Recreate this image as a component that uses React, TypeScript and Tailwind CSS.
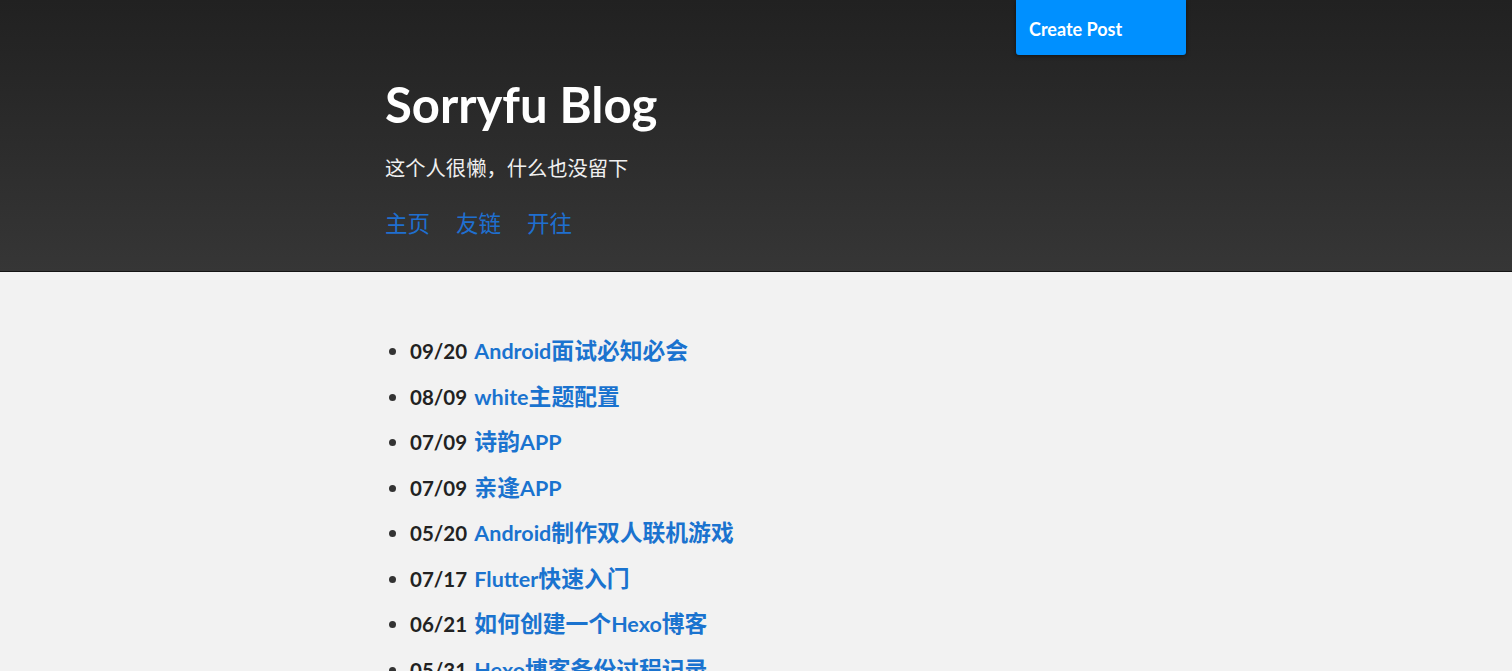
import React from "react";

const posts = [
  { date: "09/20", title: "Android面试必知必会" },
  { date: "08/09", title: "white主题配置" },
  { date: "07/09", title: "诗韵APP" },
  { date: "07/09", title: "亲逢APP" },
  { date: "05/20", title: "Android制作双人联机游戏" },
  { date: "07/17", title: "Flutter快速入门" },
  { date: "06/21", title: "如何创建一个Hexo博客" },
  { date: "05/31", title: "Hexo博客备份过程记录" },
];

function Mixed({ text }: { text: string }) {
  const parts = text.match(/[A-Za-z0-9 ]+|[^A-Za-z0-9 ]+/g) || [];
  return (
    <>
      {parts.map((p, i) =>
        /[A-Za-z0-9]/.test(p) ? (
          <span key={i} className="text-[21.5px]">{p}</span>
        ) : (
          <span key={i} className="text-[22.8px]">{p}</span>
        )
      )}
    </>
  );
}

export default function App() {
  return (
    <div
      className="relative min-h-[671px] bg-[#f2f2f2] overflow-hidden"
      style={{ fontFamily: 'Lato, "Noto Sans CJK SC", sans-serif' }}
    >
      <header className="h-[272px] bg-gradient-to-b from-[#212121] to-[#363636] border-b border-[#141414]">
        <div className="ml-[385px] pt-[74px]">
          <h1 className="text-[49px] font-bold text-white leading-[60px]">Sorryfu Blog</h1>
          <p className="mt-[19px] text-[20.3px] leading-[30px] text-[#f0f0f0]">这个人很懒，什么也没留下</p>
          <nav className="mt-[26px] flex gap-[26px] text-[22.5px] leading-[30px] text-[#1f6fcf]">
            <a>主页</a>
            <a>友链</a>
            <a>开往</a>
          </nav>
        </div>
      </header>
      <a className="absolute top-0 left-[1016px] w-[170px] h-[55px] bg-[#0090ff] rounded-b-[3px] shadow-[0_1px_4px_rgba(0,0,0,0.5)] flex items-center pl-[13px] pt-[3px] text-white font-bold text-[18px]">
        Create Post
      </a>
      <ul className="ml-[385px] pt-[56px] list-disc pl-[25px] text-[#333]">
        {posts.map((p, i) => (
          <li key={i} className="h-[45.5px] text-[21.5px] font-bold leading-[45.5px]">
            <span className="text-[#222] text-[20.5px]">{p.date}</span>{" "}
            <a className="ml-[2px] text-[#1a73cf]">
              <Mixed text={p.title} />
            </a>
          </li>
        ))}
      </ul>
    </div>
  );
}
